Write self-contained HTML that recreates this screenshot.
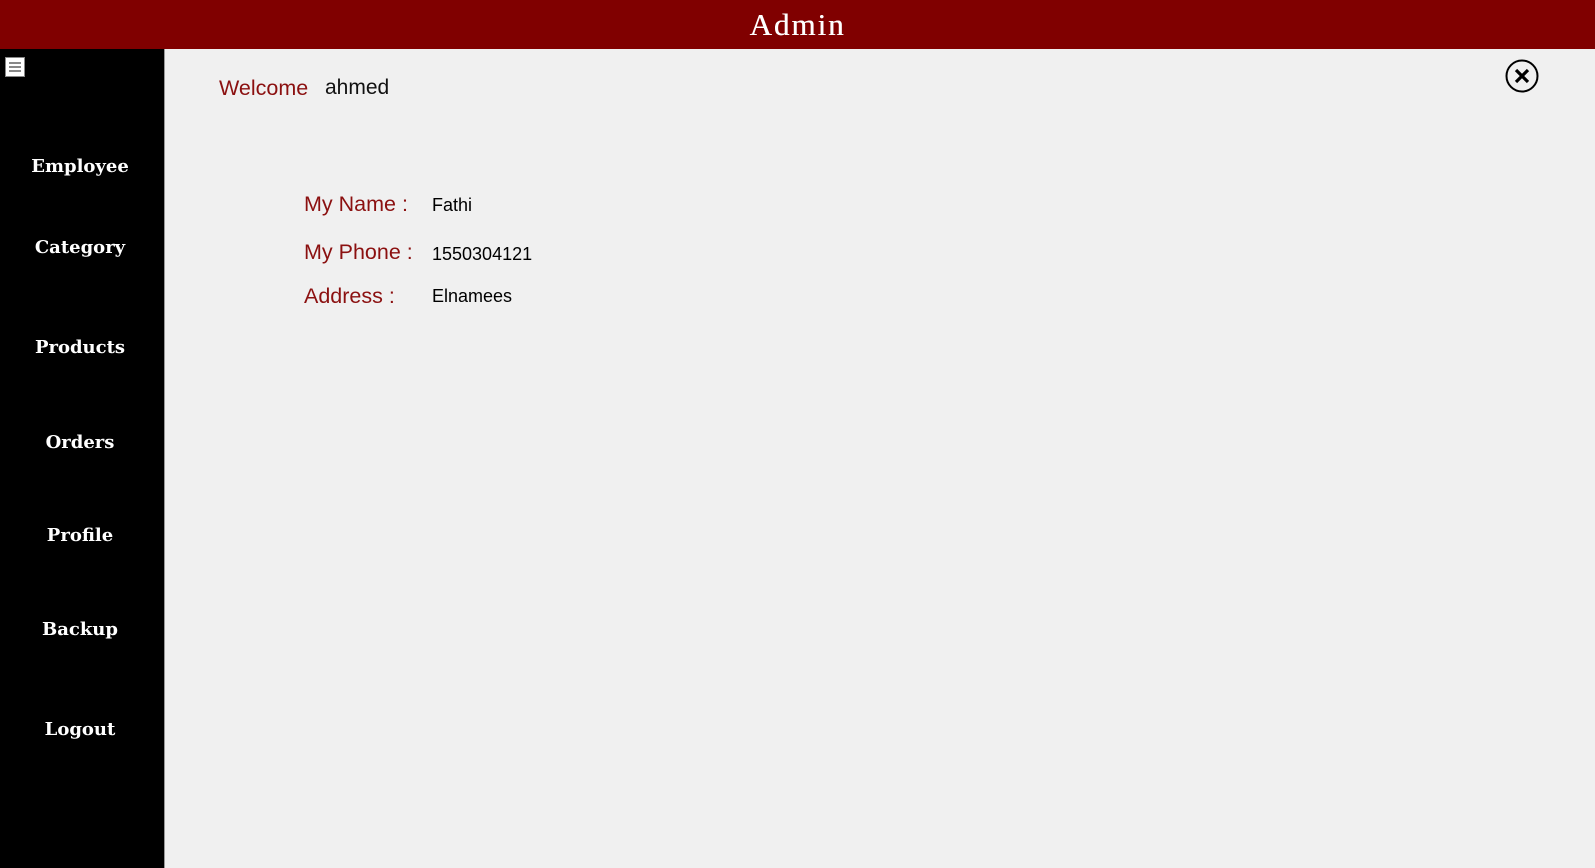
<!DOCTYPE html>
<html><head><meta charset="utf-8"><style>
html,body{margin:0;padding:0;width:1595px;height:868px;overflow:hidden;background:#f0f0f0;font-family:"Liberation Sans",Arial,sans-serif;}
.hdr{position:absolute;left:0;top:0;width:1595px;height:49px;background:#800000;color:#fff;font-family:"Liberation Serif",serif;font-size:31px;text-align:center;line-height:50px;letter-spacing:2px;text-shadow:0.4px 0 0 #fff;}
.side{position:absolute;left:0;top:49px;width:164px;height:819px;background:#000;border-right:1px solid #999;}
.nav{position:absolute;left:0;width:160px;text-align:center;color:#fff;font-family:"DejaVu Serif",serif;font-weight:bold;font-size:18px;line-height:24px;}
.ic{position:absolute;left:5px;top:57px;width:18px;height:18px;background:#fff;border:1px solid #888;}
.ic i{position:absolute;left:3px;width:12px;height:2px;background:#888;}
.t{position:absolute;white-space:nowrap;line-height:24px;}
.r{color:#8b1010;font-size:21.5px;}
.b{color:#000;font-size:18px;}
</style></head><body>
<div class="hdr">Admin</div>
<div class="side"></div>
<div class="ic"><i style="top:4px"></i><i style="top:8px"></i><i style="top:12px"></i></div>
<div class="nav" style="top:155px">Employee</div>
<div class="nav" style="top:236px">Category</div>
<div class="nav" style="top:336px">Products</div>
<div class="nav" style="top:431px">Orders</div>
<div class="nav" style="top:524px">Profile</div>
<div class="nav" style="top:618px">Backup</div>
<div class="nav" style="top:718px">Logout</div>
<div class="t r" style="left:219px;top:76px">Welcome</div>
<div class="t" style="left:325px;top:76px;font-size:21px;color:#111">ahmed</div>
<div class="t r" style="left:304px;top:192px">My Name :</div>
<div class="t b" style="left:432px;top:193px">Fathi</div>
<div class="t r" style="left:304px;top:240px">My Phone :</div>
<div class="t b" style="left:432px;top:242px">1550304121</div>
<div class="t r" style="left:304px;top:284px">Address :</div>
<div class="t b" style="left:432px;top:284px">Elnamees</div>
<svg style="position:absolute;left:1505px;top:59px" width="34" height="34" viewBox="0 0 34 34">
<circle cx="17" cy="17" r="15.5" fill="none" stroke="#000" stroke-width="2"/>
<path d="M11 11L23 23M23 11L11 23" stroke="#000" stroke-width="3.2"/>
</svg>
</body></html>
